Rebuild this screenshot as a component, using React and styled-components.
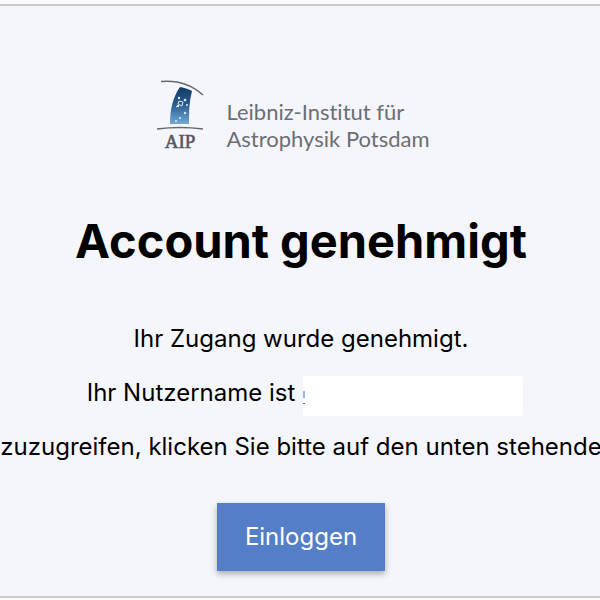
import React from 'react';
import styled, { createGlobalStyle } from 'styled-components';

const colors = {
	background: '#f5f6fb',
	border: '#cbcbcd',
	blue: '#547ec8',
	link: '#3574e3',
	grey: '#6c6e72',
};

// styles
const GlobalStyle = createGlobalStyle`
	body {
		margin: 0;
		background: #fafafc;
		color: #000;
		font-family: Inter, 'Liberation Sans', sans-serif;
	}
`;

const Card = styled.main`
	display: flex;
	flex-direction: column;
	align-items: center;
	margin: 4px 0 2px;
	padding: 74px 0 25px 2px;
	border-top: 2px solid ${colors.border};
	border-bottom: 2px solid ${colors.border};
	background: ${colors.background};
	overflow: hidden;
`;

const Brand = styled.div`
	display: flex;
	gap: 20px;
	margin-right: 16px;
`;

const Emblem = styled.svg`
	display: block;
	width: 50px;
	height: 72px;
`;

const BrandName = styled.div`
	padding-top: 18px;
	color: ${colors.grey};
	font-family: Lato, 'Open Sans', sans-serif;
	font-size: 22px;
	font-variant-ligatures: none;
	line-height: 27px;
	white-space: nowrap;
`;

const Heading = styled.h1`
	margin: 59px 0 48px;
	font-size: 47px;
	font-weight: 700;
	line-height: 60px;
`;

const Text = styled.p`
	display: flex;
	justify-content: center;
	align-items: center;
	margin: 0 0 14px;
	font-size: 24px;
	line-height: 40px;
	white-space: nowrap;
`;

const UserName = styled.a`
	width: 220px;
	height: 40px;
	margin: 6px 0 0 8px;
	border-radius: 2px;
	background: linear-gradient(${colors.link}, ${colors.link}) 0 27px / 2px 1px
			no-repeat,
		linear-gradient(#94b5f0, #94b5f0) 0 15px / 2px 7px no-repeat, #fff;
`;

const UserLine = styled(Text)`
	height: 40px;
	padding-left: 8px;
`;

const LoginButton = styled.button`
	margin-top: 22px;
	padding: 14px 28px;
	border: 0;
	background: ${colors.blue};
	box-shadow: 0 3px 6px rgba(0, 0, 0, 0.3);
	color: #fff;
	font-family: inherit;
	font-size: 24px;
	line-height: 40px;
	cursor: pointer;
`;

const Logo = () => (
	<Emblem viewBox='0 0 50 72' role='img' aria-label='AIP'>
		<defs>
			<linearGradient id='sky' x1='0' y1='0' x2='0' y2='1'>
				<stop offset='0' stopColor='#123b67' />
				<stop offset='0.45' stopColor='#28598d' />
				<stop offset='1' stopColor='#6faad6' />
			</linearGradient>
		</defs>
		<path
			d='M5 1.5C21 0 36 5 47 15'
			fill='none'
			stroke='#626971'
			strokeWidth='1.5'
		/>
		<path
			d='M24 7C29 8 33 9 36 11C33 22 33 33 33 44H14C14 29 17 17 24 7Z'
			fill='url(#sky)'
		/>
		<g fill='#d9edf7'>
			<circle cx='23' cy='18' r='1.2' />
			<circle cx='29' cy='20' r='1.3' />
			<circle cx='31' cy='25' r='1' />
			<circle cx='22' cy='26' r='1.2' />
			<circle cx='29' cy='33' r='1.2' />
			<circle cx='24' cy='38' r='1.1' />
			<circle cx='20' cy='41' r='1' />
		</g>
		<path
			d='M23 21L27 22L26 26L22 24ZM22 26L20 27'
			fill='none'
			stroke='#d9edf7'
			strokeWidth='1'
		/>
		<path
			d='M1 49Q24 46 47 49'
			fill='none'
			stroke='#626971'
			strokeWidth='1.5'
		/>
		<text
			x='24'
			y='68'
			textAnchor='middle'
			fill='#55595f'
			stroke='#55595f'
			strokeWidth='0.6'
			fontFamily="'Liberation Serif', serif"
			fontSize='19'
		>
			AIP
		</text>
	</Emblem>
);

// markup
const App = () => {
	return (
		<>
			<GlobalStyle />
			<Card>
				<Brand>
					<Logo />
					<BrandName>
						Leibniz-Institut für
						<br />
						Astrophysik Potsdam
					</BrandName>
				</Brand>
				<Heading>Account genehmigt</Heading>
				<Text>Ihr Zugang wurde genehmigt.</Text>
				<UserLine>
					Ihr Nutzername ist
					<UserName href='#account' aria-label='Nutzername' />
				</UserLine>
				<Text>zuzugreifen, klicken Sie bitte auf den unten stehende</Text>
				<LoginButton type='button'>Einloggen</LoginButton>
			</Card>
		</>
	);
};

export default App;
